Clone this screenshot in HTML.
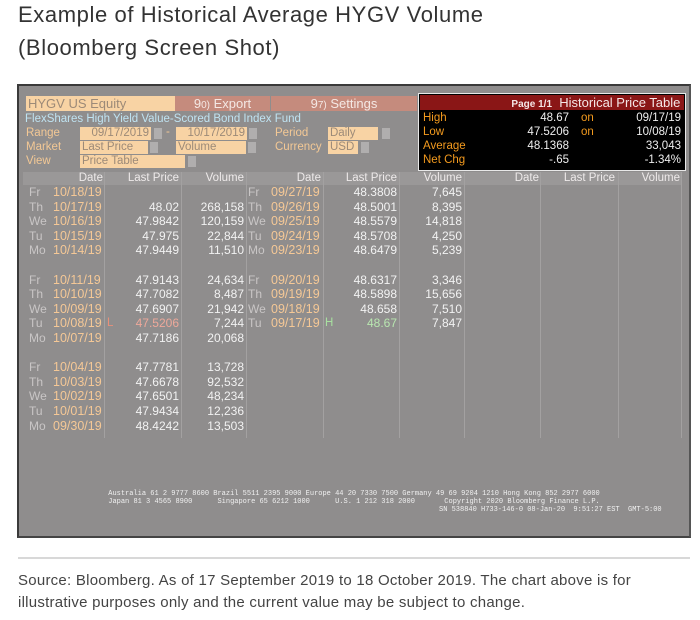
<!DOCTYPE html>
<html><head><style>
body{margin:0;width:700px;height:620px;background:#fff;position:relative;overflow:hidden;font-family:"Liberation Sans",sans-serif}
.a{position:absolute;white-space:nowrap}
h1{position:absolute;margin:0;left:18px;font-weight:normal;font-size:22px;color:#333;letter-spacing:0.6px}
#scr{position:absolute;left:17px;top:84px;width:670px;height:450px;background:#8f8d8d;border:2px solid #3a3a3a;border-right-color:#555;border-bottom-color:#444;font-size:11.5px}
.pe{background:#f8d3a4;color:#9c8a78}
.btn{background:#c58b7d;color:#f4e8e4;text-align:center;font-size:13px}
.lab{color:#f3c895}
.dd{background:#b0aeae;width:8px;height:11px}
.col{position:absolute;top:86px;height:266px;border-right:1px solid #a3a1a1}
.hd{color:#eeeaea;text-align:right}
.r{text-align:right;color:#f2f2f2}
.dy{color:#c9c6c6}
.dt{color:#f5c896}
</style></head><body>
<h1 style="top:2px">Example of Historical Average HYGV Volume</h1>
<h1 style="top:35px">(Bloomberg Screen Shot)</h1>

<div id="scr">
 <div class="a pe" style="left:7px;top:10px;width:148px;height:15px;font-size:13px;line-height:15px;padding-left:2px">HYGV US Equity</div>
 <div class="a btn" style="left:156px;top:10px;width:95px;height:15px;line-height:15px">9<span style="font-size:10px">0)</span> Export</div>
 <div class="a btn" style="left:252px;top:10px;width:146px;height:15px;line-height:15px">9<span style="font-size:10px">7)</span> Settings</div>
 <div class="a" style="left:6px;top:27px;color:#bfe3f2;font-size:11.5px">FlexShares High Yield Value-Scored Bond Index Fund</div>
 <div class="a lab" style="left:7px;top:41px">Range</div>
 <div class="a lab" style="left:7px;top:55px">Market</div>
 <div class="a lab" style="left:7px;top:69px">View</div>
 <div class="a pe" style="left:61px;top:41px;width:69px;height:13px;line-height:13px;text-align:right;padding-right:2px">09/17/2019</div>
 <div class="a dd" style="left:135px;top:42px"></div>
 <div class="a lab" style="left:147px;top:40px">-</div>
 <div class="a pe" style="left:157px;top:41px;width:69px;height:13px;line-height:13px;text-align:right;padding-right:2px">10/17/2019</div>
 <div class="a dd" style="left:230px;top:42px"></div>
 <div class="a pe" style="left:61px;top:55px;width:66px;height:13px;line-height:13px;padding-left:2px">Last Price</div>
 <div class="a dd" style="left:131px;top:56px"></div>
 <div class="a pe" style="left:157px;top:55px;width:68px;height:13px;line-height:13px;padding-left:2px">Volume</div>
 <div class="a dd" style="left:229px;top:56px"></div>
 <div class="a pe" style="left:61px;top:69px;width:103px;height:13px;line-height:13px;padding-left:2px">Price Table</div>
 <div class="a dd" style="left:169px;top:70px"></div>
 <div class="a lab" style="left:256px;top:41px">Period</div>
 <div class="a lab" style="left:256px;top:55px">Currency</div>
 <div class="a pe" style="left:309px;top:41px;width:48px;height:13px;line-height:13px;padding-left:2px">Daily</div>
 <div class="a dd" style="left:363px;top:42px"></div>
 <div class="a pe" style="left:309px;top:55px;width:28px;height:13px;line-height:13px;padding-left:2px">USD</div>
 <div class="a dd" style="left:342px;top:56px"></div>

 <div class="a" style="left:399px;top:7px;width:266px;height:76px;background:#000;border:1px solid #e8e8e8;font-size:11.5px">
  <div class="a" style="left:1px;top:1px;width:264px;height:15px;background:#8a1616;color:#f4e6e6;font-size:13px;line-height:15px;text-align:right"><span style="font-size:10px;font-weight:bold">Page 1/1</span>&nbsp; Historical Price Table&nbsp;</div>
  <div class="a" style="left:4px;top:17px;color:#f39a1e;line-height:14px">High<br>Low<br>Average<br>Net Chg</div>
  <div class="a" style="left:80px;top:17px;width:70px;text-align:right;color:#eee;line-height:14px">48.67<br>47.5206<br>48.1368<br>-.65</div>
  <div class="a" style="left:162px;top:17px;color:#f39a1e;line-height:14px">on<br>on</div>
  <div class="a" style="left:180px;top:17px;width:82px;text-align:right;color:#eee;line-height:14px">09/17/19<br>10/08/19<br>33,043<br>-1.34%</div>
 </div>

 <div class="a" style="left:4px;top:86px;width:658px;height:13px;background:#9a9898"></div>
 <div class="col" style="left:4px;width:81px"></div>
 <div class="col" style="left:86px;width:76px"></div>
 <div class="col" style="left:163px;width:64px"></div>
 <div class="col" style="left:228px;width:76px"></div>
 <div class="col" style="left:305px;width:75px"></div>
 <div class="col" style="left:381px;width:64px"></div>
 <div class="col" style="left:446px;width:75px"></div>
 <div class="col" style="left:522px;width:77px"></div>
 <div class="col" style="left:600px;width:62px"></div>

 <div class="a hd" style="left:40px;top:86px;width:44px">Date</div>
 <div class="a hd" style="left:96px;top:86px;width:64px">Last Price</div>
 <div class="a hd" style="left:170px;top:86px;width:55px">Volume</div>
 <div class="a hd" style="left:260px;top:86px;width:42px">Date</div>
 <div class="a hd" style="left:314px;top:86px;width:64px">Last Price</div>
 <div class="a hd" style="left:388px;top:86px;width:55px">Volume</div>
 <div class="a hd" style="left:476px;top:86px;width:44px">Date</div>
 <div class="a hd" style="left:532px;top:86px;width:64px">Last Price</div>
 <div class="a hd" style="left:604px;top:86px;width:57px">Volume</div>

 <div class="a dy" style="left:10px;top:99px;line-height:14.6px;font-size:12px">Fr<br>Th<br>We<br>Tu<br>Mo<br><br>Fr<br>Th<br>We<br>Tu<br>Mo<br><br>Fr<br>Th<br>We<br>Tu<br>Mo</div>
 <div class="a dt" style="left:34px;top:99px;line-height:14.6px;font-size:12.5px">10/18/19<br>10/17/19<br>10/16/19<br>10/15/19<br>10/14/19<br><br>10/11/19<br>10/10/19<br>10/09/19<br>10/08/19<br>10/07/19<br><br>10/04/19<br>10/03/19<br>10/02/19<br>10/01/19<br>09/30/19</div>
 <div class="a" style="left:88px;top:99px;line-height:14.6px;color:#e8907a"><br><br><br><br><br><br><br><br><br>L</div>
 <div class="a r" style="left:96px;top:99px;width:64px;line-height:14.6px;font-size:12px">&nbsp;<br>48.02<br>47.9842<br>47.975<br>47.9449<br><br>47.9143<br>47.7082<br>47.6907<br><span style="color:#eea89a">47.5206</span><br>47.7186<br><br>47.7781<br>47.6678<br>47.6501<br>47.9434<br>48.4242</div>
 <div class="a r" style="left:161px;top:99px;width:64px;line-height:14.6px;font-size:12px">&nbsp;<br>268,158<br>120,159<br>22,844<br>11,510<br><br>24,634<br>8,487<br>21,942<br>7,244<br>20,068<br><br>13,728<br>92,532<br>48,234<br>12,236<br>13,503</div>

 <div class="a dy" style="left:229px;top:99px;line-height:14.6px;font-size:12px">Fr<br>Th<br>We<br>Tu<br>Mo<br><br>Fr<br>Th<br>We<br>Tu</div>
 <div class="a dt" style="left:252px;top:99px;line-height:14.6px;font-size:12.5px">09/27/19<br>09/26/19<br>09/25/19<br>09/24/19<br>09/23/19<br><br>09/20/19<br>09/19/19<br>09/18/19<br>09/17/19</div>
 <div class="a" style="left:306px;top:99px;line-height:14.6px;color:#a8e0a0"><br><br><br><br><br><br><br><br><br>H</div>
 <div class="a r" style="left:314px;top:99px;width:64px;line-height:14.6px;font-size:12px">48.3808<br>48.5001<br>48.5579<br>48.5708<br>48.6479<br><br>48.6317<br>48.5898<br>48.658<br><span style="color:#b8e6b0">48.67</span></div>
 <div class="a r" style="left:379px;top:99px;width:64px;line-height:14.6px;font-size:12px">7,645<br>8,395<br>14,818<br>4,250<br>5,239<br><br>3,346<br>15,656<br>7,510<br>7,847</div>

 <div class="a" style="left:0;top:405px;width:670px;text-align:center;font-family:'Liberation Mono',monospace;font-size:7px;color:#f0f0f0;line-height:7.5px">Australia 61 2 9777 8600 Brazil 5511 2395 9000 Europe 44 20 7330 7500 Germany 49 69 9204 1210 Hong Kong 852 2977 6000<br>Japan 81 3 4565 8900 &nbsp; &nbsp; &nbsp;Singapore 65 6212 1000 &nbsp; &nbsp; &nbsp;U.S. 1 212 318 2000 &nbsp; &nbsp; &nbsp; Copyright 2020 Bloomberg Finance L.P.</div>
 <div class="a" style="left:420px;top:420px;font-family:'Liberation Mono',monospace;font-size:7px;color:#f0f0f0">SN 538840 H733-146-0 08-Jan-20 &nbsp;9:51:27 EST &nbsp;GMT-5:00</div>
</div>

<div class="a" style="left:18px;top:557px;width:672px;height:2px;background:#d8d8d8"></div>
<div class="a" style="left:18px;top:570px;font-size:15px;letter-spacing:0.25px;color:#444;line-height:22px">Source: Bloomberg. As of 17 September 2019 to 18 October 2019. The chart above is for<br>illustrative purposes only and the current value may be subject to change.</div>
</body></html>
